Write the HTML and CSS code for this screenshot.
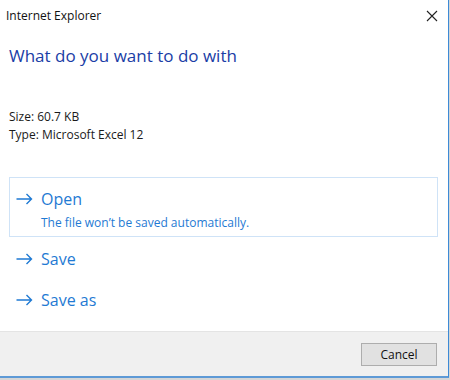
FILE: index.html
```html
<!DOCTYPE html>
<html lang="en">
<head>
    <meta charset="UTF-8">
    <title>Internet Explorer</title>
    <link rel="stylesheet" href="styles.css">
</head>
<body>
    <div class="dialog">
        <div class="titlebar">
            <span class="title">Internet Explorer</span>
            <button class="close" aria-label="Close">
                <svg width="12" height="12" viewBox="0 0 12 12"><path d="M1 1L11 11M11 1L1 11" stroke="#222" stroke-width="1.1"/></svg>
            </button>
        </div>
        <div class="content">
            <h1>What do you want to do with</h1>
            <div class="file-info">
                <div>Size: 60.7 KB</div>
                <div>Type: Microsoft Excel 12</div>
            </div>
            <div class="options">
                <a class="option selected" href="#">
                    <svg class="arrow" width="17" height="12" viewBox="0 0 17 12"><path d="M0.5 6H15.5M10.5 1L15.5 6L10.5 11" fill="none" stroke="currentColor" stroke-width="1.4"/></svg>
                    <span class="option-text">
                        <span class="option-label">Open</span>
                        <span class="option-note">The file won&rsquo;t be saved automatically.</span>
                    </span>
                </a>
                <a class="option" href="#">
                    <svg class="arrow" width="17" height="12" viewBox="0 0 17 12"><path d="M0.5 6H15.5M10.5 1L15.5 6L10.5 11" fill="none" stroke="currentColor" stroke-width="1.4"/></svg>
                    <span class="option-label">Save</span>
                </a>
                <a class="option" href="#">
                    <svg class="arrow" width="17" height="12" viewBox="0 0 17 12"><path d="M0.5 6H15.5M10.5 1L15.5 6L10.5 11" fill="none" stroke="currentColor" stroke-width="1.4"/></svg>
                    <span class="option-label">Save as</span>
                </a>
            </div>
        </div>
        <div class="footer">
            <button class="cancel">Cancel</button>
        </div>
    </div>
</body>
</html>
```

FILE: styles.css
```css
:root {
    --heading-color: #1a3da6;
    --link-color: #1f7ad3;
    --footer-bg: #f0f0f0;
}
body {
    margin: 0;
    background-color: #d6d6d6;
    font-family: 'Open Sans', 'Noto Sans', sans-serif;
    color: #1a1a1a;
}
.dialog {
    width: 448px;
    height: 376px;
    background-color: #fff;
    border-right: 1px solid #3d8ad6;
    border-bottom: 2px solid #5e9ad6;
    display: flex;
    flex-direction: column;
}
.titlebar {
    height: 31px;
    display: flex;
    align-items: center;
    justify-content: space-between;
    padding: 0 10px 0 6px;
}
.title {
    font-size: 12px;
    color: #111;
}
.close {
    border: none;
    background: none;
    padding: 0;
    width: 12px;
    height: 12px;
    display: flex;
}
.content {
    flex: 1;
    padding: 12px 10px 0 9px;
}
h1 {
    margin: 0;
    font-size: 17px;
    font-weight: 400;
    color: var(--heading-color);
    line-height: 26px;
}
.file-info {
    margin-top: 39px;
    font-size: 12px;
    line-height: 18px;
}
.options {
    margin-top: 33px;
    display: flex;
    flex-direction: column;
}
.option {
    display: flex;
    align-items: flex-start;
    gap: 8px;
    padding: 9px 6px 7px;
    color: var(--link-color);
    text-decoration: none;
    border: 1px solid transparent;
}
.option.selected {
    border-color: #cfe3f7;
    padding: 10px 6px 3px;
}
.option + .option {
    margin-top: 1px;
}
.arrow {
    flex: none;
    margin-top: 5px;
}
.option-text {
    display: flex;
    flex-direction: column;
}
.option-label {
    font-size: 16px;
    line-height: 22px;
}
.option-note {
    font-size: 12px;
    line-height: 20px;
    margin-top: 3px;
}
.footer {
    height: 44px;
    background-color: var(--footer-bg);
    border-top: 1px solid #e4e4e4;
    display: flex;
    align-items: center;
    justify-content: flex-end;
    padding-right: 11px;
}
.cancel {
    width: 76px;
    height: 23px;
    background-color: #e1e1e1;
    border: 1px solid #adadad;
    font-family: 'Open Sans', 'Noto Sans', sans-serif;
    font-size: 12px;
    color: #111;
    padding: 0;
}
```
